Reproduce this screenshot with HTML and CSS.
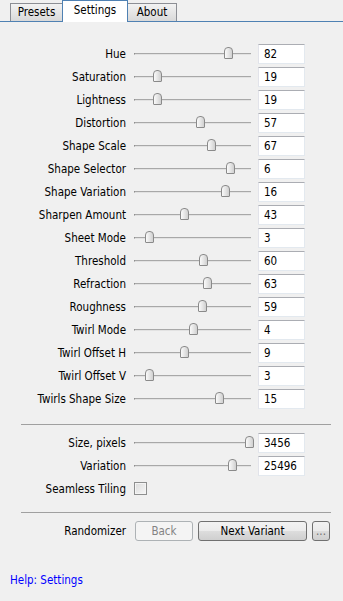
FILE: index.html
```html
<!DOCTYPE html>
<html lang="en">
<head>
  <meta charset="UTF-8" />
  <title>Settings</title>
  <link rel="stylesheet" href="styles.css">
</head>
<body>
  <div class="tabs">
    <div class="tab presets">Presets</div>
    <div class="tab active">Settings</div>
    <div class="tab about">About</div>
  </div>

  <div class="panel">
    <div class="group" id="params"></div>

    <hr class="sep">

    <div class="group">
      <div class="row">
        <label>Size, pixels</label>
        <div class="slider"><div class="track"></div><span class="thumb" style="left:111px"></span></div>
        <input type="text" value="3456">
      </div>
      <div class="row">
        <label>Variation</label>
        <div class="slider"><div class="track"></div><span class="thumb" style="left:94px"></span></div>
        <input type="text" value="25496">
      </div>
      <div class="row">
        <label>Seamless Tiling</label>
        <span class="check"></span>
      </div>
    </div>

    <hr class="sep sep2">

    <div class="row buttons">
      <label>Randomizer</label>
      <button class="btn back" disabled>Back</button>
      <button class="btn next">Next Variant</button>
      <button class="btn more">...</button>
    </div>
  </div>

  <a class="help" href="#">Help: Settings</a>

  <script>
    // name, value, thumb centre (px from track start)
    const params = [
      ["Hue", 82, 94],
      ["Saturation", 19, 23],
      ["Lightness", 19, 23],
      ["Distortion", 57, 66],
      ["Shape Scale", 67, 77],
      ["Shape Selector", 6, 96],
      ["Shape Variation", 16, 91],
      ["Sharpen Amount", 43, 50],
      ["Sheet Mode", 3, 15],
      ["Threshold", 60, 69],
      ["Refraction", 63, 73],
      ["Roughness", 59, 68],
      ["Twirl Mode", 4, 59],
      ["Twirl Offset H", 9, 50],
      ["Twirl Offset V", 3, 15],
      ["Twirls Shape Size", 15, 85]
    ];

    const box = document.getElementById("params");
    params.forEach(function (p) {
      const row = document.createElement("div");
      row.className = "row";
      row.innerHTML =
        '<label>' + p[0] + '</label>' +
        '<div class="slider"><div class="track"></div>' +
        '<span class="thumb" style="left:' + (p[2] - 4) + 'px"></span></div>' +
        '<input type="text" value="' + p[1] + '">';
      box.appendChild(row);
    });
  </script>
</body>
</html>
```

FILE: styles.css
```css
body {
  margin: 0;
  background: #f0f0f0;
  font-family: Tahoma, "DejaVu Sans Condensed", "Liberation Sans", sans-serif;
  font-size: 11.5px;
  color: #000;
}

.tabs {
  display: flex;
  align-items: flex-end;
  height: 21px;
  padding-left: 10px;
  border-bottom: 1px solid #4f81b3;
}

.tab {
  box-sizing: border-box;
  height: 18px;
  line-height: 17px;
  text-align: center;
  border: 1px solid #8c8e94;
  border-bottom: none;
  background: linear-gradient(#f2f2f2, #e3e3e3 60%, #d9d9d9);
}

.presets {
  width: 53px;
}

.about {
  width: 50px;
  margin-left: -1px;
}

.tab.active {
  width: 66px;
  height: 22px;
  line-height: 19px;
  margin-left: -1px;
  margin-bottom: -1px;
  border-color: #4f81b3;
  background: #fff;
  position: relative;
  z-index: 1;
}

.panel {
  padding-top: 20px;
}

.row {
  display: flex;
  align-items: center;
  height: 23px;
}

.row label {
  width: 126px;
  text-align: right;
  flex: none;
}

.slider {
  position: relative;
  width: 117px;
  height: 11px;
  margin: 0 7px 0 8px;
  flex: none;
}

.track {
  margin-top: 5px;
  height: 1px;
  background: #a8a8a8;
  border-bottom: 1px solid #e2e2e2;
  border-left: 1px solid #8f8f8f;
}

.thumb {
  position: absolute;
  top: 0;
  width: 7px;
  height: 10px;
  border: 1px solid #8a8a8a;
  border-radius: 4px 4px 1px 1px;
  background: linear-gradient(to right, #fafafa, #e6e6e6 50%, #d0d0d0);
  margin-top: -1px;
}

.row input {
  width: 47px;
  height: 20px;
  box-sizing: border-box;
  border: 1px solid #e3e9ef;
  border-top-color: #abadb3;
  border-left-color: #e2e3ea;
  background: #fff;
  font: inherit;
  padding: 0 5px;
  color: #000;
  outline: none;
}

.sep {
  margin: 14px 12px 6px 21px;
  border: none;
  border-top: 1px solid #a0a0a0;
  height: 0;
}

.sep2 {
  margin-top: 12px;
}

.check {
  width: 11px;
  height: 11px;
  margin-left: 8px;
  border: 1px solid #8e8f8f;
  background: linear-gradient(135deg, #dcdcdc, #f6f6f6);
  box-shadow: inset 0 0 0 1px #f4f4f4;
}

.buttons {
  height: 24px;
}

.btn {
  height: 20px;
  font: inherit;
  border: 1px solid #707070;
  border-radius: 3px;
  background: linear-gradient(#f2f2f2 0%, #ebebeb 50%, #dddddd 51%, #cfcfcf 100%);
  color: #000;
  padding: 0;
}

.back {
  width: 58px;
  margin-left: 9px;
  border-color: #adb2b5;
  background: #f4f4f4;
  color: #838383;
}

.next {
  width: 109px;
  margin-left: 5px;
}

.more {
  width: 18px;
  margin-left: 5px;
  color: #6d6d6d;
}

.help {
  display: block;
  margin: 30px 0 0 10px;
  color: #0000ff;
  text-decoration: none;
}
```
